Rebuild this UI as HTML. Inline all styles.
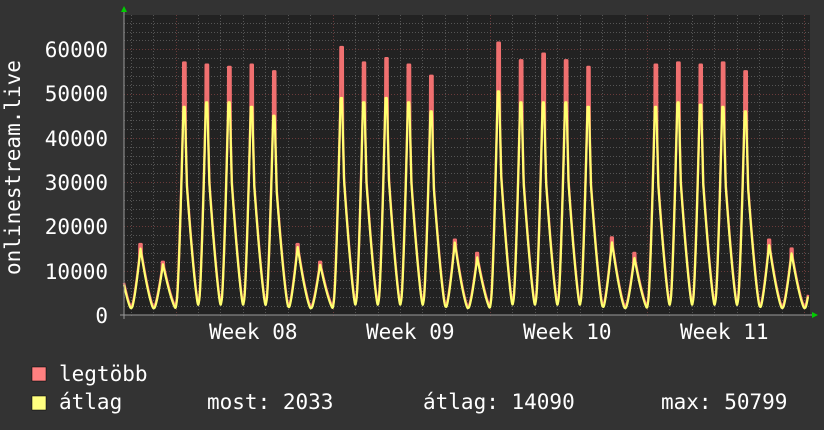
<!DOCTYPE html>
<html><head><meta charset="utf-8"><style>
html,body{margin:0;padding:0;background:#333;}
body{width:824px;height:430px;overflow:hidden;position:relative;}
svg{position:absolute;left:0;top:0;}
text{font-family:"DejaVu Sans Mono","Liberation Mono",monospace;fill:#fff;font-size:21px;}
</style></head><body>
<svg width="824" height="430" id="s" xmlns="http://www.w3.org/2000/svg">
<rect x="0" y="0" width="824" height="430" fill="#333"/>
<rect x="124" y="15" width="686" height="300" fill="#222"/>
<g id="grid"></g>
<g id="data"></g>
<line x1="120" y1="315" x2="815" y2="315" stroke="#999" stroke-width="1"/>
<line x1="124" y1="319" x2="124" y2="12" stroke="#999" stroke-width="1"/>
<polygon points="812,312 818,315 812,318" fill="#0c0"/>
<polygon points="121,12 127,12 124,6" fill="#0c0"/>
<g text-anchor="end">
<text x="108" y="57">60000</text>
<text x="108" y="101">50000</text>
<text x="108" y="146">40000</text>
<text x="108" y="190">30000</text>
<text x="108" y="234">20000</text>
<text x="108" y="279">10000</text>
<text x="108" y="323">0</text>
</g>
<text x="0" y="0" transform="translate(20,275) rotate(-90)">onlinestream.live</text>
<text x="209" y="339">Week 08</text>
<text x="366" y="339">Week 09</text>
<text x="523" y="339">Week 10</text>
<text x="680" y="339">Week 11</text>
<rect x="32" y="367" width="14" height="14" fill="#ff8080" stroke="#000" stroke-width="0.5"/>
<rect x="32" y="396" width="14" height="14" fill="#ffff80" stroke="#000" stroke-width="0.5"/>
<text x="59" y="381">legtöbb</text>
<text x="59" y="409">átlag</text>
<text x="207" y="409">most: 2033</text>
<text x="423" y="409">átlag: 14090</text>
<text x="661" y="409">max: 50799</text>
</svg>
<script>
var NS="http://www.w3.org/2000/svg";
var g=document.getElementById('grid'),d=document.getElementById('data');
function Y(v){return 315-v*265.7/60000;}
function ln(x1,y1,x2,y2,c,dash){var l=document.createElementNS(NS,'line');l.setAttribute('x1',x1);l.setAttribute('y1',y1);l.setAttribute('x2',x2);l.setAttribute('y2',y2);l.setAttribute('stroke',c);l.setAttribute('stroke-width',1);if(dash)l.setAttribute('stroke-dasharray',dash);g.appendChild(l);}
for(var v=2000;v<=66000;v+=2000){var y=Math.round(Y(v))+0.5;if(y<15)break;var maj=v%10000==0;ln(124,y,810,y,maj?'#6a3a3a':'#555','1,2');}
var P=22.45;
for(var k=-1;k<32;k++){var x=130.6+k*P;if(x<125||x>810)continue;var xx=Math.round(x)+0.5;var maj=((k-2)%7==0);ln(xx,15,xx,318,maj?'#6a3a3a':'#555','1,2');}
var mx=[16000,12000,57000,56500,56000,56500,55000,16000,12000,60500,57000,58000,56500,54000,17000,14000,61500,57500,59000,57500,56000,17500,14000,56500,57000,56500,57000,55000,17000,15000];
var av=[15000,11500,47000,48000,48000,47000,45000,15500,11500,49000,48000,49000,48000,46000,16500,13000,50500,48000,48000,48000,47000,16500,13000,47000,48000,47500,47000,46000,16000,14000];
var lo=1200;
function raw(x){var t=(x-131.5)/P;var k=Math.floor(t);var o=(t-k)*P;var pk=(k>=0&&k<av.length)?av[k]:(k<0?14000:15000);
 if(pk>30000){
  if(o<7){return lo+(pk-lo)*Math.pow(o/7,1.4);}
  if(o<8.5)return pk;
  if(o<10.5){return pk-(pk*0.38)*((o-8.5)/2);}
  var m=pk*0.62;var r=(o-10.5)/(P-10.5);return lo+(m-lo)*Math.pow(1-r,1.35);
 }
 if(o<9){return lo+(pk-lo)*Math.pow(o/9,1.4);}
 var r=(o-9)/(P-9);return lo+(pk-lo)*Math.pow(1-r,1.4);}
function avg(x){var t=(x-131.5)/P;var o=(t-Math.floor(t))*P;
 if(o<3||o>P-3){var s=0,n=0;for(var u=-1.5;u<=1.5;u+=0.25){s+=raw(x+u);n++;}var sm=s/n;
  var w=o<3?o/3:(P-o)/3;return sm*(1-w)+raw(x)*w;}
 return raw(x);}
function mxv(x){var a=avg(x);var t=(x-131.5)/P;var k=Math.floor(t);var o=(t-k)*P;
 if(k>=0&&k<mx.length){var pm=mx[k],pa=av[k];
  if(pa>30000){if(o>=6.8&&o<=9.2)return pm;}
  else{if(o>=8&&o<=10)return pm;}}
 return a+400;}
function path(fn,col,w){var s='';for(var x=124;x<=808;x+=0.25){var v=fn(x);s+=(s?'L':'M')+x.toFixed(2)+','+Y(v).toFixed(1);}var p=document.createElementNS(NS,'path');p.setAttribute('d',s);p.setAttribute('fill','none');p.setAttribute('stroke',col);p.setAttribute('stroke-width',w);p.setAttribute('stroke-linejoin','round');d.appendChild(p);}
path(mxv,'#f07070',2.5);path(avg,'#ffff70',2.2);
</script>
</body></html>
